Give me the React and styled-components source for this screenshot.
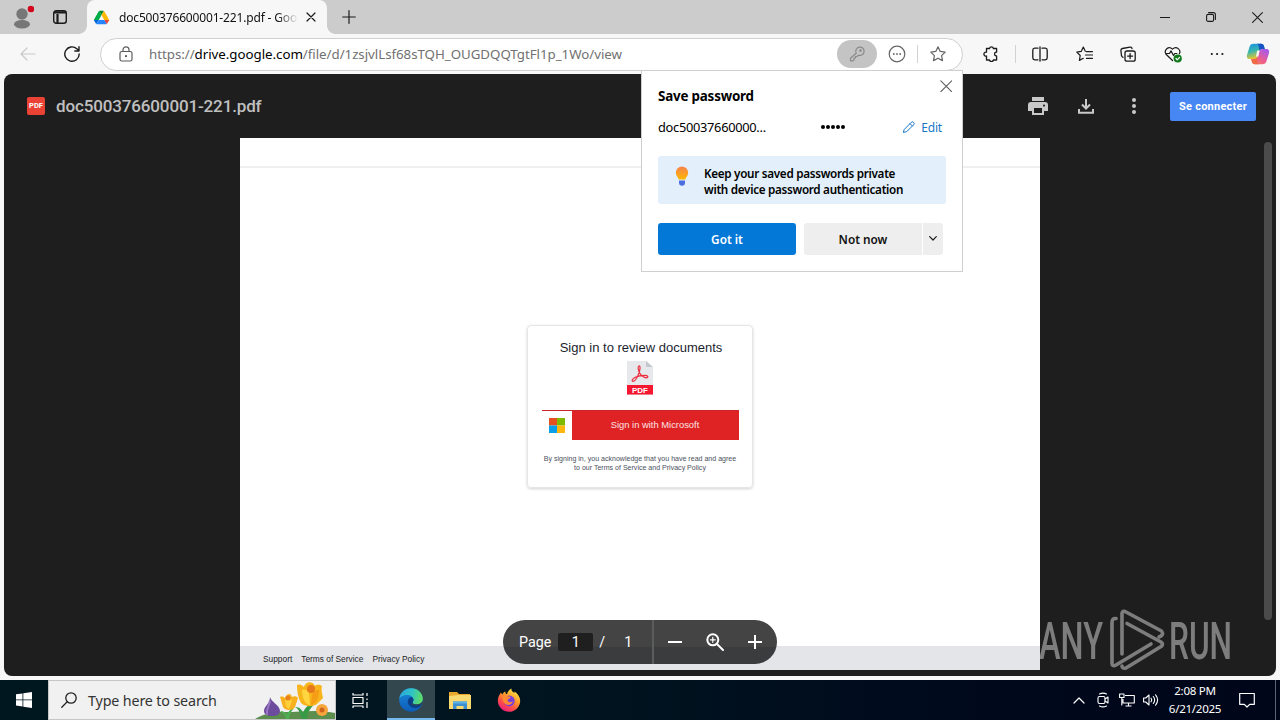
import React from "react";
import styled, { createGlobalStyle, css } from "styled-components";

const ui = `"Noto Sans", "Open Sans", sans-serif`;
const google = `Roboto, "Open Sans", sans-serif`;
const arial = `"Liberation Sans", Arial, sans-serif`;

const GlobalStyle = createGlobalStyle`
  *, *::before, *::after {
    box-sizing: border-box;
  }

  body {
    margin: 0;
    overflow: hidden;
    font-family: ${ui};
  }

  svg {
    display: block;
    flex: none;
  }

  button {
    border: 0;
    padding: 0;
    font: inherit;
    background: none;
  }
`;

const Screen = styled.div`
  position: relative;
  display: flex;
  flex-direction: column;
  width: 1280px;
  height: 720px;
  background: #f7f7f7;
  overflow: hidden;
`;

// Centers an icon inside a fixed-width cell
const Slot = styled.div`
  display: flex;
  align-items: center;
  justify-content: center;
  flex: none;
  width: ${(p) => p.$w || 44}px;
  height: ${(p) => (p.$h ? `${p.$h}px` : "100%")};
`;

/* Title bar ----------- */
const TitleBar = styled.header`
  display: flex;
  height: 34px;
  flex: none;
  padding-left: 3px;
  background: #cccccc;
`;

const Tab = styled.div`
  position: relative;
  display: flex;
  align-items: center;
  width: 240px;
  margin-left: 8px;
  padding-left: 7px;
  border-radius: 8px 8px 0 0;
  background: #f7f7f7;

  &::before,
  &::after {
    content: "";
    position: absolute;
    bottom: 0;
    width: 8px;
    height: 8px;
  }

  &::before {
    left: -8px;
    background: radial-gradient(circle at 0 0, transparent 7.5px, #f7f7f7 8px);
  }

  &::after {
    right: -8px;
    background: radial-gradient(circle at 8px 0, transparent 7.5px, #f7f7f7 8px);
  }
`;

const TabTitle = styled.span`
  flex: none;
  width: 180px;
  margin-left: 10px;
  overflow: hidden;
  white-space: nowrap;
  font-size: 12px;
  letter-spacing: -0.16px;
  color: #111;
  mask-image: linear-gradient(to right, #000 158px, transparent 179px);
`;

const Spacer = styled.div`
  flex: 1;
`;

const TrayGap = styled.div`
  width: 8px;
`;

/* Toolbar ----------- */
const Toolbar = styled.nav`
  display: flex;
  align-items: center;
  height: 40px;
  flex: none;
  padding-left: 6px;
`;

const AddressBar = styled.div`
  display: flex;
  align-items: center;
  width: 863px;
  height: 33px;
  margin: 0 6px;
  padding: 0 4px 0 17px;
  border: 1px solid #cfcfcf;
  border-radius: 17px;
  background: #fff;
`;

const Url = styled.span`
  flex: 1;
  margin-left: 15px;
  white-space: nowrap;
  font-size: 13.3px;
  letter-spacing: -0.03px;
  color: #717171;

  b {
    font-weight: 400;
    color: #000;
  }
`;

const KeyPill = styled(Slot)`
  border-radius: 14px;
  background: #c4c4c4;
`;

const Rule = styled.i`
  width: 1px;
  height: 18px;
  flex: none;
  margin: 0 ${(p) => p.$gap || 0}px;
  background: #d2d2d2;
`;

/* Drive viewer ----------- */
const Viewer = styled.main`
  position: relative;
  height: 602px;
  flex: none;
  margin: 0 4px;
  border-radius: 8px;
  background: #1e1e1e;
`;

const ViewerHeader = styled.div`
  display: flex;
  align-items: center;
  height: 64px;
  padding: 0 20px 0 23px;
  font-family: ${google};
`;

const FileBadge = styled.span`
  width: 18px;
  height: 18px;
  border-radius: 2px;
  background: #ea4335;
  color: #fff;
  font: 700 7.5px/18px ${google};
  text-align: center;
`;

const FileName = styled.h1`
  flex: 1;
  margin: -1px 0 0 11px;
  font-size: 17px;
  font-weight: 500;
  letter-spacing: -0.14px;
  line-height: 22px;
  color: #c0c0c0;
`;

const ConnectButton = styled.button`
  width: 86px;
  height: 29px;
  margin-left: 12px;
  border-radius: 2px;
  background: #4787f3;
  color: #fff;
  font: 700 11px ${google};
  letter-spacing: 0.25px;
`;

const Page = styled.section`
  display: flex;
  flex-direction: column;
  align-items: center;
  width: 800px;
  height: 532px;
  margin: 0 auto;
  background: #fff;
  font-family: ${arial};
`;

const PageTop = styled.div`
  width: 100%;
  height: 30px;
  margin-bottom: 157px;
  border-bottom: 2px solid #efefef;
`;

const SignInCard = styled.div`
  display: flex;
  flex-direction: column;
  align-items: center;
  width: 226px;
  height: 163px;
  padding-top: 14px;
  border: 1px solid #e6e6e8;
  border-radius: 4px;
  box-shadow: 0 1px 3px rgba(0, 0, 0, 0.18);
`;

const CardTitle = styled.h2`
  margin: 0 0 6px 2px;
  font-size: 13px;
  font-weight: 400;
  line-height: 15px;
  white-space: nowrap;
  color: #1b1f30;
`;

const MicrosoftButton = styled.div`
  display: flex;
  width: 197px;
  height: 30px;
  margin-top: 15px;
  border-top: 1px solid #c8262b;
  color: #fbe3e3;
  font: 9.4px/28px ${arial};
`;

const MicrosoftLabel = styled.span`
  flex: 1;
  height: 29px;
  background: #df2224;
  text-align: center;
`;

const Terms = styled.p`
  margin: 14px 0 0;
  font-size: 7.05px;
  line-height: 9px;
  text-align: center;
  white-space: nowrap;
  color: #4b5160;
`;

const PageFooter = styled.footer`
  display: flex;
  align-items: center;
  gap: 9px;
  width: 100%;
  height: 24px;
  margin-top: auto;
  padding: 2px 0 0 23px;
  background: #e4e5e9;
  font-size: 8.35px;
  color: #1d1f26;
`;

const PageControls = styled.div`
  position: absolute;
  left: 499px;
  bottom: 12px;
  display: flex;
  align-items: center;
  width: 274px;
  height: 44px;
  padding-left: 16px;
  border-radius: 22px;
  background: linear-gradient(#444 60%, #3b3c3d 61%);
  color: #fff;
  font: 14.3px ${google};
`;

const PageInput = styled.span`
  width: 35px;
  height: 18px;
  margin: 0 6px 0 7px;
  border-radius: 2px;
  background: #1f1f1f;
  line-height: 18px;
  text-align: center;
`;

const PageTotal = styled.span`
  width: 29px;
  margin-left: 13px;
  padding-left: 6px;
`;

const ControlRule = styled.i`
  width: 2px;
  height: 44px;
  margin-left: 5px;
  background: #5b5c5d;
`;

const Scrollbar = styled.div`
  position: absolute;
  top: 68px;
  right: 4px;
  width: 8px;
  height: 478px;
  border-radius: 4px;
  background: #4b4b4b;
`;

const Watermark = styled.svg`
  position: absolute;
  left: 1036px;
  top: 604px;
  overflow: visible;
`;

/* Save password popup ----------- */
const Popup = styled.aside`
  position: absolute;
  left: 641px;
  top: 70px;
  display: flex;
  flex-direction: column;
  width: 322px;
  height: 202px;
  padding: 0 16px;
  border: 1px solid #cfcfcf;
  background: #fff;
  color: #000;
`;

const PopupHeader = styled.div`
  display: flex;
  justify-content: space-between;
  align-items: flex-start;
  height: 44px;
  padding-top: 9px;
  margin-right: -6px;
`;

const PopupTitle = styled.h3`
  margin: 6px 0 0;
  font-size: 13.4px;
  font-weight: 700;
  letter-spacing: -0.2px;
  line-height: 20px;
`;

const Credentials = styled.div`
  display: flex;
  align-items: center;
  height: 24px;
  font-size: 12.8px;
`;

const UserName = styled.span`
  width: 163px;
  letter-spacing: -0.28px;
`;

const Dots = styled.span`
  display: flex;
  gap: 1px;
  flex: 1;

  i {
    width: 4px;
    height: 4px;
    border-radius: 50%;
    background: #000;
  }
`;

const EditLink = styled.a`
  display: flex;
  align-items: center;
  gap: 6px;
  margin-right: 4px;
  font-size: 12px;
  letter-spacing: -0.2px;
  color: #1677c9;
`;

const Tip = styled.div`
  display: flex;
  height: 48px;
  margin-top: 17px;
  padding: 9px 0 0 16px;
  border-radius: 3px;
  background: #e3f0fb;
  font-size: 11.7px;
  font-weight: 600;
  letter-spacing: -0.3px;
  line-height: 16px;
  white-space: nowrap;

  p {
    margin: 0 0 0 14px;
  }
`;

const Actions = styled.div`
  display: flex;
  margin-top: 19px;
`;

const PopupButton = styled.button`
  display: flex;
  align-items: center;
  justify-content: center;
  width: ${(p) => p.$w}px;
  height: 32px;
  padding-bottom: 1px;
  background: #eeeeee;
  font-size: 11.8px;
  font-weight: 600;
  color: #111;
  border-radius: ${(p) => p.$radius || "3px"};

  ${(p) =>
    p.$primary &&
    css`
      margin-right: 8px;
      background: #0478d7;
      color: #fff;
    `}
`;

const MoreButton = styled(PopupButton)`
  margin-left: 1px;
`;

/* Taskbar ----------- */
const Taskbar = styled.footer`
  display: flex;
  height: 40px;
  flex: none;
  margin-top: 4px;
  background: linear-gradient(to right, #00171f, #00141f 45%, #00081c 80%, #00061a);
  color: #fff;
`;

const SearchBox = styled.div`
  display: flex;
  align-items: center;
  width: 288px;
  padding-left: 12px;
  border: 1px solid #c6c6c6;
  background: #f1f1f1;
  color: #333;
  font-size: 14.3px;
  overflow: hidden;

  span {
    flex: 1;
    margin-left: 11px;
    white-space: nowrap;
    letter-spacing: -0.15px;
  }
`;

const TaskItem = styled(Slot)`
  ${(p) =>
    p.$active &&
    css`
      background: #33474f;
      box-shadow: inset 0 -2px #76b9ed;
    `}
`;

const Clock = styled.time`
  width: 64px;
  padding-top: 2px;
  font-size: 11.6px;
  letter-spacing: -0.3px;
  line-height: 18px;
  text-align: center;
  white-space: nowrap;
`;

const ShowDesktop = styled.i`
  width: 5px;
  border-left: 1px solid #5d6274;
`;

// Thin outlined icon; children are plain svg shapes
const Icon = ({ w = 20, h, c = "#1b1b1b", sw = 1.2, children }) => (
  <svg
    width={w}
    height={h || w}
    viewBox={`0 0 ${w} ${h || w}`}
    fill="none"
    stroke={c}
    strokeWidth={sw}
    strokeLinecap="round"
    strokeLinejoin="round"
  >
    {children}
  </svg>
);

const DriveLogo = () => (
  <svg width="15" height="15" viewBox="0 0 87.3 78">
    <path d="m6.6 66.85 3.85 6.65c.8 1.4 1.95 2.5 3.3 3.3l13.75-23.8h-27.5c0 1.55.4 3.1 1.2 4.5z" fill="#0066da" />
    <path d="m43.65 25-13.75-23.8c-1.35.8-2.5 1.9-3.3 3.3l-25.4 44a9.06 9.06 0 0 0-1.2 4.5h27.5z" fill="#00ac47" />
    <path d="m73.55 76.8c1.35-.8 2.5-1.9 3.3-3.3l1.6-2.75 7.65-13.25c.8-1.4 1.2-2.95 1.2-4.5h-27.5l5.85 11.5z" fill="#ea4335" />
    <path d="m43.65 25 13.75-23.8c-1.35-.8-2.9-1.2-4.5-1.2h-18.5c-1.6 0-3.15.45-4.5 1.2z" fill="#00832d" />
    <path d="m59.8 53h-32.3l-13.75 23.8c1.35.8 2.9 1.2 4.5 1.2h50.8c1.6 0 3.15-.45 4.5-1.2z" fill="#2684fc" />
    <path d="m73.4 26.5-12.7-22c-.8-1.4-1.95-2.5-3.3-3.3l-13.75 23.8 16.15 28h27.45c0-1.55-.4-3.1-1.2-4.5z" fill="#ffba00" />
  </svg>
);

const CopilotLogo = () => (
  <svg width="24" height="22" viewBox="0 0 24 22">
    <defs>
      <linearGradient id="cpA" x1="0" y1="0" x2="0.3" y2="1">
        <stop offset="0" stopColor="#1a8ee8" />
        <stop offset="0.5" stopColor="#35b5b0" />
        <stop offset="1" stopColor="#e6c630" />
      </linearGradient>
      <linearGradient id="cpB" x1="0.7" y1="0" x2="0" y2="1">
        <stop offset="0" stopColor="#a85be8" />
        <stop offset="0.5" stopColor="#ea5c94" />
        <stop offset="1" stopColor="#f8854c" />
      </linearGradient>
    </defs>
    <path
      fillRule="evenodd"
      d="M7.500.8H15c2 0 2.600 1 3.100 2.700L18.800 6h-1.600c-2.600 0-3.600 1.200-4.300 3.200l-1.300 4.200c-.6 1.900-1.600 2.600-3.600 2.600H4c-3 0-3.600-2-2.800-4.800L3.500 4C4.200 1.800 5.300.8 7.500.8z"
      fill="url(#cpA)"
    />
    <path d="M11 .8h4c2 0 2.600 1 3.100 2.700L18.800 6h-1.600c-2 0-3 .6-3.700 1.800L12.800 4C12.500 2 12.200 1.200 11 .8z" fill="#1753c5" />
    <path
      d="M16.500 21.200H9c-2 0-2.600-1-3.100-2.700L5.200 16h2.600c2.600 0 3.600-1.200 4.300-3.200l1.300-4.200C14 6.700 15 6 17 6h3c3 0 3.600 2 2.800 4.800L20.500 18c-.7 2.200-1.800 3.200-4 3.200z"
      fill="url(#cpB)"
    />
    <path d="M13 21.200H9c-2 0-2.600-1-3.100-2.700L5.200 16h2.600c2 0 3-.6 3.700-1.800l-.3 3.800c0 2 .6 2.800 1.800 3.200z" fill="#f06a4a" />
    <path d="M11.200 7.500h2.300l-1.200 6H10z" fill="#f7f7f7" />
  </svg>
);

const PdfFile = () => (
  <svg width="27" height="34" viewBox="0 0 27 34">
    <path d="M0 0h19l7 6v28H0z" fill="#e6e8eb" />
    <path d="M19 0l7 6h-7z" fill="#c3c8ce" />
    <g fill="none" stroke="#ee2b3c" strokeWidth="1.200" strokeLinejoin="round">
      <path d="M12 5c-1.600.3-.8 4 .6 6.800 1.600 3 4.900 5.400 7 5 2.200-.5 1.400-2.500-1.800-2.500-3.500 0-7 .8-9.500 2-3 1.500-3.800 3.600-2.500 4 1.300.3 3.500-2.300 5.200-5.800C12.800 10.800 14 4.600 12 5z" />
    </g>
    <path d="M0 24h26v9.500H0z" fill="#f4172f" />
    <text x="13" y="31.800" fill="#fff" fontFamily="Liberation Sans" fontWeight="700" fontSize="8" textAnchor="middle">
      PDF
    </text>
  </svg>
);

const EdgeLogo = () => (
  <svg width="24" height="24" viewBox="0 0 24 24">
    <defs>
      <linearGradient id="edA" x1="0" y1="0.300" x2="1" y2="0.500">
        <stop offset="0" stopColor="#2aa6e0" />
        <stop offset="0.500" stopColor="#2fc2c6" />
        <stop offset="1" stopColor="#5fdc62" />
      </linearGradient>
      <linearGradient id="edB" x1="0" y1="0" x2="0" y2="1">
        <stop offset="0" stopColor="#1b8bdb" />
        <stop offset="1" stopColor="#0c5cb8" />
      </linearGradient>
    </defs>
    <circle cx="12" cy="12" r="11.800" fill="url(#edB)" />
    <path d="M.3 11C1 4.500 6 .2 12 .2c7 0 11.800 5 11.800 10.300 0 4-3 6-6 6-2.500 0-4.300-.8-4.300-1.800 0-.7 1-1 1-3 0-2.500-2.500-4.700-6-4.700C4.500 7 1 9 .3 11z" fill="url(#edA)" />
    <path d="M13.500 14.700c0 1 1.800 1.800 4.300 1.800 1.900 0 3.700-.8 4.800-2.300 0 0 .5 1.500-.4 3.100-.8 1.300-3 2.700-6 2.700-4.200 0-7.500-3-7.500-6.500 0-2.200 1.400-4 3.400-4.600 1.500.7 2.400 1.700 2.400 2.900 0 1.700-1 2.200-1 2.900z" fill="#0b3f86" />
    <path d="M13.500 14.700c0 1 1.800 1.800 4.300 1.800 2.300 0 4.500-1 5.600-3.300l.6 2.200-1.500.8c-2 1.300-8 1.800-9.800.5z" fill="#33474f" />
  </svg>
);

const FolderLogo = () => (
  <svg width="22" height="19" viewBox="0 0 22 19">
    <path d="M0 1h8l2 2h11v15H0z" fill="#e8a92c" />
    <path d="M0 5l9-1h13v14H0z" fill="#fbd971" />
    <path d="M4 10.500h14v7.500h-3.500v-3h-7v3H4z" fill="#3d8fd0" />
    <path d="M4 10.500h14v2H4z" fill="#5fb0e4" />
  </svg>
);

const FirefoxLogo = () => (
  <svg width="24" height="24" viewBox="0 0 24 24">
    <defs>
      <linearGradient id="ffA" x1="0.800" y1="0" x2="0.200" y2="1">
        <stop offset="0" stopColor="#fff04a" />
        <stop offset="0.400" stopColor="#ff9a2a" />
        <stop offset="0.700" stopColor="#ff4a4a" />
        <stop offset="1" stopColor="#e3168a" />
      </linearGradient>
    </defs>
    <path d="M4 4.500c.4 1 .9 1.600 1.400 2C6.500 4.400 7.500 4 8.500 3.600 8.200 5 9 6 10 6.300 10.500 3.500 12.500 1.500 14.500.5c-.5 2 .7 3 2.800 4.500 0-.7.200-1 .4-1.500 3.300 2.500 5.500 5.500 5.500 9.500A11.200 11.200 0 0 1 12 23.800 11.200 11.200 0 0 1 .8 12.800C.8 9.500 2.300 6.500 4 4.500z" fill="url(#ffA)" />
    <circle cx="12.300" cy="13" r="5.400" fill="#7a40dc" />
    <path d="M5.500 7.500c2-1 4-.5 5.200.8 1.500.1 2.800.4 2.800 1.200-.3 1.300-2.800 1.400-3 2.500 0 2 3 3 5.500 1.300-1 3.200-4.500 4.700-7.500 2.700-2.500-2-3.600-5.500-3-8.500z" fill="#ff8a32" />
  </svg>
);

const Flowers = () => (
  <svg width="80" height="38" viewBox="0 0 80 38">
    <path d="M0 38c8-5 18-7 30-7 18 0 30-3 50 1v6z" fill="#5c8f4d" />
    <path d="M47 38c-2-8-4-10-7-12 5 0 7 3 8 6 1-4 5-9 13-11-4 5-9 9-9 17z" fill="#379a47" />
    <path d="M31 38c-1-4-3-6-6-8 4 0 6 2 7 4 1-3 3-6 7-7-3 4-5 7-5 11z" fill="#4caf50" />
    <path d="M15 16c1 5 10 8 10 14 0 4-4 5-8 5s-8-1-8-5c0-5 6-7 6-14z" fill="#6e4c9d" />
    <path d="M15 20c-1 5-4 9-3 14" stroke="#9a79c4" strokeWidth="2" fill="none" />
    <path d="M25 16c2-1 4 0 5 1 2-5 6-5 7-1 2-1 5-1 6 1-1 3-2 6-3 9-2 4-10 4-12 0-1-3-2-7-3-10z" fill="#f9b01e" />
    <path d="M30 20c1-3 6-3 7 0l-3 8c-2-1-4-4-4-8z" fill="#ffcf3c" />
    <path d="M42 4c3-1 5 0 7 2 1-5 8-7 11-1 2-2 5-1 7 0-1 4 0 7 1 12-2 2-4 4-6 6-4 3-12 3-16-1-3-5-4-12-4-18z" fill="#f8b51b" />
    <path d="M47 9c3-1 6 0 7 3l1 12c-5-1-8-7-8-15z" fill="#ffd640" />
    <path d="M64 9c-4 0-6 2-7 5l-1 10c5-1 8-7 8-15z" fill="#f59d15" />
    <circle cx="56" cy="8" r="4" fill="#e7781b" />
    <circle cx="33" cy="17" r="2.500" fill="#e8811c" />
    <circle cx="67" cy="29" r="6" fill="#f6a63d" />
    <circle cx="67" cy="29" r="2.500" fill="#cf651b" />
  </svg>
);

const BrowserTop = () => (
  <>
    <TitleBar>
      <Slot $w={38}>
        <svg width="24" height="26" viewBox="0 0 24 26">
          <circle cx="12" cy="10" r="5.700" fill="#777" />
          <ellipse cx="12" cy="20.300" rx="8" ry="4.200" fill="#777" />
          <circle cx="21" cy="5" r="3.300" fill="#d3061c" />
        </svg>
      </Slot>
      <Slot $w={38}>
        <Icon w={14} sw={1.4}>
          <rect x="0.700" y="0.700" width="12.600" height="12.600" rx="2.500" />
          <path d="M1 2.300h12M4.500 4v9" strokeWidth="2.200" strokeLinecap="butt" />
        </Icon>
      </Slot>
      <Tab>
        <DriveLogo />
        <TabTitle>doc500376600001-221.pdf - Google Drive</TabTitle>
        <Slot $w={24}>
          <Icon w={10}>
            <path d="M1 1l8 8M9 1L1 9" />
          </Icon>
        </Slot>
      </Tab>
      <Slot $w={43}>
        <Icon w={14}>
          <path d="M7 .7v12.600M.7 7h12.600" />
        </Icon>
      </Slot>
      <Spacer />
      <Slot $w={46}>
        <Icon w={10}>
          <path d="M0 5.500h10" />
        </Icon>
      </Slot>
      <Slot $w={46}>
        <Icon w={10} sw={1.1}>
          <rect x="0.600" y="2.400" width="7" height="7" rx="1.500" />
          <path d="M2.600.6H7.400a2 2 0 0 1 2 2v4.800" />
        </Icon>
      </Slot>
      <Slot $w={46}>
        <Icon w={11} sw={1.1}>
          <path d="M.6.6l9.800 9.800M10.400.6L.6 10.400" />
        </Icon>
      </Slot>
    </TitleBar>
    <Toolbar>
      <Slot>
        <Icon w={16} c="#c9c9c9">
          <path d="M15 8H1M7 2L1 8l6 6" />
        </Icon>
      </Slot>
      <Slot>
        <Icon w={16} sw={1.4}>
          <path d="M15.200 8A7.200 7.200 0 1 1 12.800 2.700L14.800 4.600M15 .8V5h-4.200" />
        </Icon>
      </Slot>
      <AddressBar>
        <Icon w={16} c="#5d5d5d">
          <rect x="2" y="5.500" width="12" height="9.500" rx="1.800" />
          <path d="M5 5.500V3.800a3 3 0 0 1 6 0v1.700" />
          <circle cx="8" cy="10.200" r="0.500" fill="#5d5d5d" />
        </Icon>
        <Url>
          https://<b>drive.google.com</b>/file/d/1zsjvlLsf68sTQH_OUGDQQTgtFl1p_1Wo/view
        </Url>
        <KeyPill $w={40} $h={28}>
          <Icon w={16} c="#8a8a8a">
            <path d="M7.200 7.200A4.200 4.200 0 1 1 9.500 9.200L8 10.500H6.500V12H5v1.800L4 14.800H1.500v-2.500z" />
            <circle cx="11.500" cy="4.600" r="0.700" />
          </Icon>
        </KeyPill>
        <Slot $w={40}>
          <Icon w={18} c="#666">
            <circle cx="9" cy="9" r="7.800" />
            <path d="M5.800 9h.01M9 9h.01M12.200 9h.01" strokeWidth="1.800" />
          </Icon>
        </Slot>
        <Rule />
        <Slot $w={40}>
          <Icon w={16} c="#666">
            <path d="M8 .8l2.200 4.600 5 .7-3.600 3.500.9 5L8 12.200l-4.500 2.400.9-5L.8 6.100l5-.7z" />
          </Icon>
        </Slot>
      </AddressBar>
      <Slot>
        <Icon w={16} sw={1.300}>
          <path d="M3.500 2.500h3a2 2 0 0 1 3.900 0h3.200v3.700h-.6a1.900 1.900 0 0 0 0 3.700h.6v4.100h-3.200a2 2 0 0 1-3.900 0h-3v-4a2 2 0 1 1 0-3.800z" />
        </Icon>
      </Slot>
      <Rule $gap={2} />
      <Slot>
        <Icon w={16} sw={1.300}>
          <path d="M6 2.200H2.700A2 2 0 0 0 .8 4.200v7.600a2 2 0 0 0 1.900 2H6M10 2.200h3.300a2 2 0 0 1 1.900 2v7.600a2 2 0 0 1-1.900 2H10M8 .8v14.400" />
        </Icon>
      </Slot>
      <Slot>
        <Icon w={17} h={16}>
          <path d="M9.300 5.300L7.300 1 5.200 5.400.8 6.100l3.400 3.400-.8 4.900 3.900-2.100M10.500 5.700h6M9.500 9h7M10.500 12.400h6" />
        </Icon>
      </Slot>
      <Slot>
        <Icon w={16} sw={1.300}>
          <rect x="5" y="5" width="10.200" height="10.200" rx="2" />
          <path d="M10.100 7.600v5M7.600 10.100h5M3 11.300c-.8-.2-1.300-.7-1.500-1.600L.9 4.500c-.1-1 .4-1.800 1.500-2L10 1.100c1-.2 1.800.3 2 1.500" />
        </Icon>
      </Slot>
      <Slot $w={45}>
        <Icon w={18} h={17}>
          <path d="M8.500 14.500L2 8.200C-.5 4.500 4.500-.8 8.500 3.200c4-4 9 1 6.800 4.600M2.500 7.500h3l1.500-2.600 2.500 4.600 1.300-2h2" />
          <circle cx="13.700" cy="12.500" r="4.100" fill="#10791b" stroke="none" />
          <path d="M12 12.500l1.300 1.300 2.300-2.400" stroke="#fff" />
        </Icon>
      </Slot>
      <Slot $w={43}>
        <Icon w={16}>
          <path d="M2.800 8h.01M8.100 8h.01M13.400 8h.01" strokeWidth="2.200" />
        </Icon>
      </Slot>
      <Slot $w={40}>
        <CopilotLogo />
      </Slot>
    </Toolbar>
  </>
);

const DriveViewer = () => (
  <Viewer>
    <ViewerHeader>
      <FileBadge>PDF</FileBadge>
      <FileName>doc500376600001-221.pdf</FileName>
      <Slot $w={48}>
        <svg width="20" height="18" viewBox="0 0 20 18" fill="#c9c9c9">
          <path d="M4 0h12v4H4zM3 5h14a3 3 0 0 1 3 3v6h-4v4H4v-4H0V8a3 3 0 0 1 3-3zm3 6v5h8v-5zm10-3.500a1 1 0 1 0 .01 0z" fillRule="evenodd" />
        </svg>
      </Slot>
      <Slot $w={48}>
        <Icon w={16} c="#c9c9c9" sw={2}>
          <path d="M8 1v9M4 6.500l4 4 4-4M1 11v3.800h14V11" strokeLinecap="butt" strokeLinejoin="miter" />
        </Icon>
      </Slot>
      <Slot $w={48}>
        <svg width="4" height="16" viewBox="0 0 4 16" fill="#c9c9c9">
          <circle cx="2" cy="2" r="2" />
          <circle cx="2" cy="8" r="2" />
          <circle cx="2" cy="14" r="2" />
        </svg>
      </Slot>
      <ConnectButton>Se connecter</ConnectButton>
    </ViewerHeader>
    <Page>
      <PageTop />
      <SignInCard>
        <CardTitle>Sign in to review documents</CardTitle>
        <PdfFile />
        <MicrosoftButton>
          <Slot $w={30} $h={29}>
            <svg width="16" height="15" viewBox="0 0 16 15">
              <path d="M0 0h8v7.500H0z" fill="#e5501f" />
              <path d="M8 0h8v7.500H8z" fill="#7fb900" />
              <path d="M0 7.500h8V15H0z" fill="#079fe8" />
              <path d="M8 7.500h8V15H8z" fill="#fdb60c" />
            </svg>
          </Slot>
          <MicrosoftLabel>Sign in with Microsoft</MicrosoftLabel>
        </MicrosoftButton>
        <Terms>
          By signing in, you acknowledge that you have read and agree
          <br />
          to our Terms of Service and Privacy Policy
        </Terms>
      </SignInCard>
      <PageFooter>
        <span>Support</span>
        <span>Terms of Service</span>
        <span>Privacy Policy</span>
      </PageFooter>
    </Page>
    <PageControls>
      <span>Page</span>
      <PageInput>1</PageInput>
      <span>/</span>
      <PageTotal>1</PageTotal>
      <ControlRule />
      <Slot $w={42}>
        <Icon w={14} c="#fff" sw={2}>
          <path d="M0 7h14" strokeLinecap="butt" />
        </Icon>
      </Slot>
      <Slot $w={38}>
        <Icon w={18} c="#fff" sw={2}>
          <circle cx="6.800" cy="6.800" r="5.500" />
          <path d="M11 11l6 6" />
          <path d="M6.800 4.300v5M4.300 6.800h5" strokeWidth="1.200" />
        </Icon>
      </Slot>
      <Slot $w={42}>
        <Icon w={14} c="#fff" sw={2}>
          <path d="M0 7h14M7 0v14" strokeLinecap="butt" />
        </Icon>
      </Slot>
    </PageControls>
    <Scrollbar />
  </Viewer>
);

const SavePassword = () => (
  <Popup>
    <PopupHeader>
      <PopupTitle>Save password</PopupTitle>
      <Icon w={12} c="#5f5f5f" sw={1.1}>
        <path d="M.8.8l10.900 10.900M11.700.8L.8 11.700" />
      </Icon>
    </PopupHeader>
    <Credentials>
      <UserName>doc50037660000...</UserName>
      <Dots>
        <i />
        <i />
        <i />
        <i />
        <i />
      </Dots>
      <EditLink>
        <Icon w={12} c="#1677c9" sw={1}>
          <path d="M1.500 8.200L8.200 1.400a1.600 1.600 0 0 1 2.400 2.400L3.800 10.600.7 11.400zM7 2.600L9.400 5" />
        </Icon>
        Edit
      </EditLink>
    </Credentials>
    <Tip>
      <svg width="16" height="22" viewBox="0 0 16 22">
        <defs>
          <linearGradient id="bulb" x1="0" y1="0" x2="0" y2="1">
            <stop offset="0" stopColor="#f5824f" />
            <stop offset="1" stopColor="#ffb700" />
          </linearGradient>
        </defs>
        <path d="M8 1.500a6.200 6.200 0 0 1 6.200 6.200c0 3-2.200 4.300-3 6.800H4.800c-.8-2.500-3-3.800-3-6.800A6.200 6.200 0 0 1 8 1.500z" fill="url(#bulb)" />
        <path d="M5 15.500h6v2.300a3 3 0 0 1-6 0z" fill="#4c6fe0" />
      </svg>
      <p>
        Keep your saved passwords private
        <br />
        with device password authentication
      </p>
    </Tip>
    <Actions>
      <PopupButton $w={138} $primary>
        Got it
      </PopupButton>
      <PopupButton $w={118} $radius="3px 0 0 3px">
        Not now
      </PopupButton>
      <MoreButton $w={20} $radius="0 3px 3px 0">
        <Icon w={8} h={5}>
          <path d="M.7.7L4 4 7.300.7" />
        </Icon>
      </MoreButton>
    </Actions>
  </Popup>
);

const WindowsTaskbar = () => (
  <Taskbar>
    <Slot $w={48}>
      <svg width="16" height="16" viewBox="0 0 16 16" fill="#fff">
        <path d="M0 2.300l6.500-.9v6.100H0zM7.300 1.300L16 0v7.500H7.300zM0 8.300h6.500v6.200L0 13.600zM7.300 8.300H16V16l-8.700-1.300z" />
      </svg>
    </Slot>
    <SearchBox>
      <Icon w={16} c="#222" sw={1.300}>
        <circle cx="10" cy="6" r="5.200" />
        <path d="M6.200 9.700L.8 15.200" />
      </Icon>
      <span>Type here to search</span>
      <Flowers />
    </SearchBox>
    <TaskItem $w={51}>
      <Icon w={19} h={17} c="#fff" sw={1.200}>
        <path d="M1 1v2h10V1M1 5.500h10v6H1zM1 16v-2h10v2M15 1v3M15 10v6M15 6.500v1.500" strokeLinecap="butt" />
      </Icon>
    </TaskItem>
    <TaskItem $w={48} $active>
      <EdgeLogo />
    </TaskItem>
    <TaskItem $w={49}>
      <FolderLogo />
    </TaskItem>
    <TaskItem $w={49}>
      <FirefoxLogo />
    </TaskItem>
    <Spacer />
    <Slot $w={24}>
      <Icon w={12} h={7} c="#fff">
        <path d="M1 6l5-5 5 5" />
      </Icon>
    </Slot>
    <Slot $w={24}>
      <Icon w={12} h={16} c="#fff" sw={1.100}>
        <rect x="1" y="4.500" width="7" height="7" rx="1.500" />
        <path d="M8 7l3-2v6L8 9M2.500 2Q6 .2 9.500 2M2.500 14Q6 15.800 9.500 14" />
      </Icon>
    </Slot>
    <Slot $w={24}>
      <Icon w={16} h={14} c="#fff" sw={1.100}>
        <path d="M6 2.500h9.300v7.500H4V6M9.500 10v3M6.500 13h6M.6 1h4.400v3.500H.6zM2.800 4.500v8" strokeLinecap="butt" />
      </Icon>
    </Slot>
    <Slot $w={24}>
      <Icon w={16} h={14} c="#fff" sw={1.100}>
        <path d="M.6 5h2.200L6 2v10L2.800 9H.6zM8 5.200q1.300 1.800 0 3.600M10.300 3.500q2.700 3.500 0 7M12.600 1.800q4 5.200 0 10.400" />
      </Icon>
    </Slot>
    <Clock>
      2:08 PM
      <br />
      6/21/2025
    </Clock>
    <Slot $w={40}>
      <Icon w={16} c="#fff" sw={1.200}>
        <path d="M.7 1.500h14.600v10.800h-4.600L8 15l-2.700-2.700H.7z" />
      </Icon>
    </Slot>
    <TrayGap />
    <ShowDesktop />
  </Taskbar>
);

const AnyRunMark = () => (
  <Watermark width="200" height="72" viewBox="0 0 200 72" opacity="0.500">
    <g fill="#dcdcdc" fontFamily="Roboto" fontWeight="500" fontSize="51">
      <text x="3" y="55" textLength="64" lengthAdjust="spacingAndGlyphs">
        ANY
      </text>
      <text x="133" y="55" textLength="63" lengthAdjust="spacingAndGlyphs">
        RUN
      </text>
    </g>
    <g fill="none" stroke="#dcdcdc" strokeWidth="3.600" strokeLinecap="round" strokeLinejoin="round">
      <path d="M80 14.500q-4-.5-4 4V59q0 4 4 2l35-21" />
      <path d="M86 50V9q1-3 4-1l35.500 19q3 4-2.500 6" />
      <path d="M91 19.500l34 18.500q3 2 0 4.500L90 64q-4 1-4-2" />
    </g>
  </Watermark>
);

const App = () => (
  <Screen>
    <GlobalStyle />
    <BrowserTop />
    <DriveViewer />
    <WindowsTaskbar />
    <AnyRunMark />
    <SavePassword />
  </Screen>
);

export default App;
